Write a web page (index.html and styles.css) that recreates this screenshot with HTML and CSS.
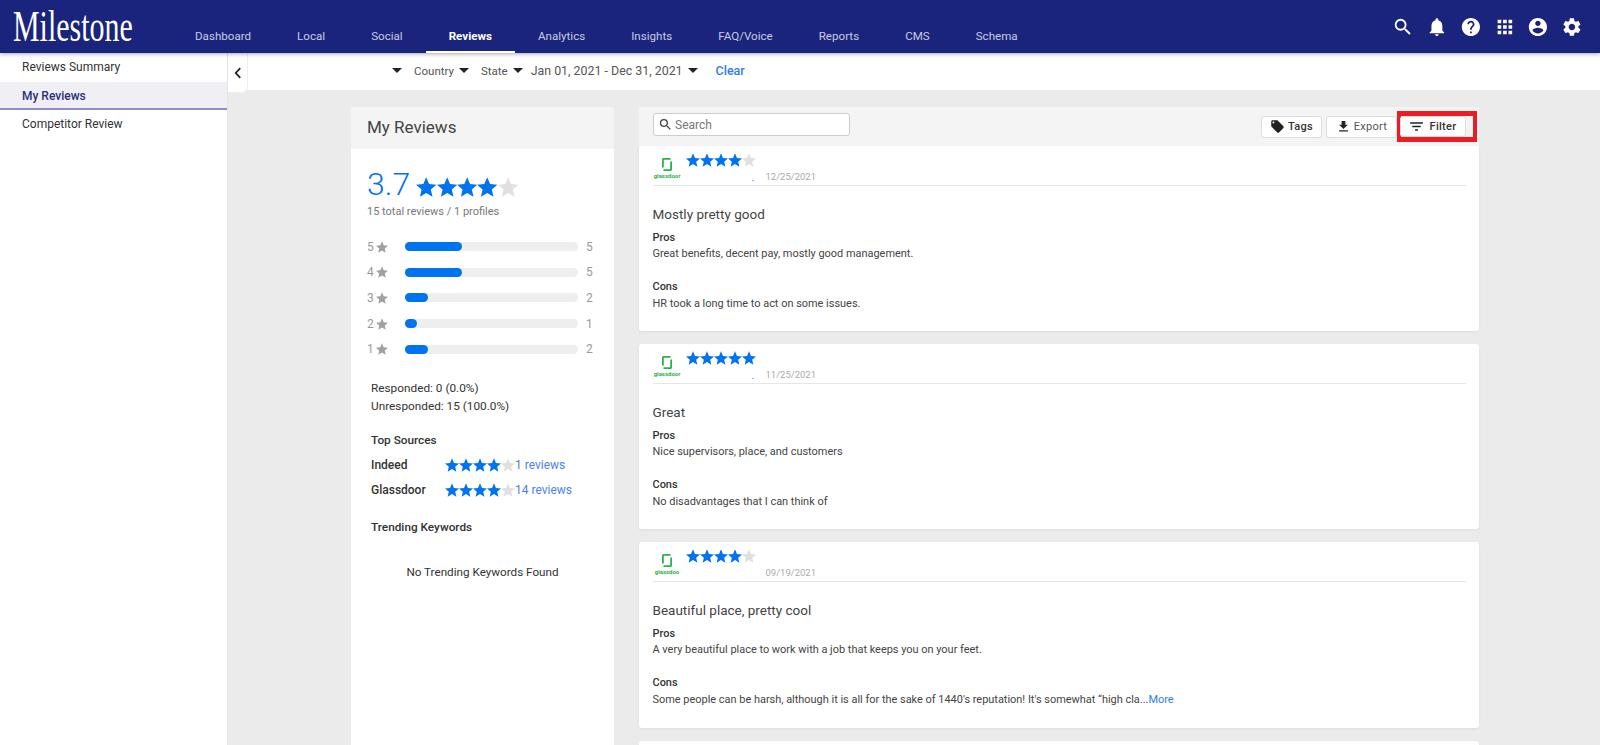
FILE: index.html
```html
<!DOCTYPE html>
<html lang="en">
<head>
    <meta charset="UTF-8">
    <title>My Reviews</title>
    <link rel="stylesheet" href="styles.css">
</head>
<body>
    <svg class="defs" width="0" height="0">
        <symbol id="i-star" viewBox="2 2 20 19"><path d="M12 17.27L18.18 21l-1.64-6.96L22 9.24l-7.19-.61L12 2 9.19 8.63 2 9.24l5.46 4.8L5.82 21z"/></symbol>
        <symbol id="i-search" viewBox="0 0 24 24"><path d="M15.5 14h-.79l-.28-.27A6.471 6.471 0 0 0 16 9.5 6.5 6.5 0 1 0 9.5 16c1.61 0 3.09-.59 4.23-1.57l.27.28v.79l5 4.99L20.49 19l-4.99-5zm-6 0C7.01 14 5 11.99 5 9.5S7.01 5 9.5 5 14 7.01 14 9.5 11.99 14 9.5 14z"/></symbol>
        <symbol id="i-caret" viewBox="7 10 10 5"><path d="M7 10l5 5 5-5z"/></symbol>
        <symbol id="i-glassdoor" viewBox="0 0 10 13"><path d="M1.500 0H8.500v1.800H1.800v7.700H0V1.500C0 .7.700 0 1.500 0zM10 3.500v8c0 .8-.7 1.500-1.500 1.500H1.500v-1.800h6.700V3.500z"/></symbol>
    </svg>

    <header class="topbar">
        <div class="logo"><span>Milestone</span></div>
        <nav class="tabs">
            <a class="tab">Dashboard</a>
            <a class="tab">Local</a>
            <a class="tab">Social</a>
            <a class="tab active">Reviews</a>
            <a class="tab">Analytics</a>
            <a class="tab">Insights</a>
            <a class="tab">FAQ/Voice</a>
            <a class="tab">Reports</a>
            <a class="tab">CMS</a>
            <a class="tab">Schema</a>
        </nav>
        <div class="top-icons">
            <svg viewBox="0 0 24 24"><use href="#i-search"/></svg>
            <svg viewBox="0 0 24 24"><path d="M12 22c1.100 0 2-.900 2-2h-4c0 1.100.890 2 2 2zm6-6v-5c0-3.070-1.640-5.640-4.500-6.320V4c0-.830-.670-1.500-1.500-1.500s-1.500.670-1.500 1.500v.680C7.630 5.360 6 7.920 6 11v5l-2 2v1h16v-1l-2-2z"/></svg>
            <svg viewBox="0 0 24 24"><path d="M12 2C6.480 2 2 6.480 2 12s4.480 10 10 10 10-4.480 10-10S17.520 2 12 2zm1 17h-2v-2h2v2zm2.070-7.750l-.900.920C13.450 12.900 13 13.500 13 15h-2v-.500c0-1.100.450-2.100 1.170-2.830l1.240-1.260c.370-.360.590-.860.590-1.410 0-1.100-.900-2-2-2s-2 .900-2 2H8c0-2.210 1.790-4 4-4s4 1.790 4 4c0 .880-.360 1.680-.930 2.250z"/></svg>
            <svg viewBox="0 0 24 24"><path d="M4 8h4V4H4v4zm6 12h4v-4h-4v4zm-6 0h4v-4H4v4zm0-6h4v-4H4v4zm6 0h4v-4h-4v4zm6-10v4h4V4h-4zm-6 4h4V4h-4v4zm6 6h4v-4h-4v4zm0 6h4v-4h-4v4z"/></svg>
            <svg viewBox="0 0 24 24"><path d="M12 2C6.480 2 2 6.480 2 12s4.480 10 10 10 10-4.480 10-10S17.520 2 12 2zm0 3c1.660 0 3 1.340 3 3s-1.340 3-3 3-3-1.340-3-3 1.340-3 3-3zm0 14.200c-2.500 0-4.710-1.280-6-3.220.030-1.990 4-3.080 6-3.080 1.990 0 5.970 1.090 6 3.080-1.290 1.940-3.500 3.220-6 3.220z"/></svg>
            <svg viewBox="0 0 24 24"><path d="M19.140 12.940c.040-.300.060-.610.060-.940 0-.320-.020-.640-.070-.940l2.030-1.580c.180-.140.230-.410.120-.610l-1.920-3.320c-.120-.220-.370-.290-.590-.220l-2.390.960c-.500-.380-1.030-.700-1.620-.940l-.360-2.540c-.040-.240-.240-.410-.480-.410h-3.840c-.240 0-.430.170-.470.410l-.360 2.540c-.590.240-1.130.570-1.620.940l-2.390-.960c-.220-.080-.470 0-.590.220L2.740 8.870c-.120.210-.080.470.120.610l2.030 1.580c-.050.300-.090.630-.090.940s.020.640.070.940l-2.030 1.580c-.180.140-.230.410-.120.610l1.920 3.320c.120.220.370.290.590.220l2.390-.960c.500.380 1.030.700 1.620.940l.360 2.540c.050.240.240.410.480.410h3.840c.240 0 .440-.170.470-.410l.360-2.540c.590-.240 1.130-.560 1.620-.940l2.390.960c.220.080.470 0 .590-.220l1.920-3.320c.120-.220.070-.470-.120-.610l-2.010-1.580zM12 15.600c-1.980 0-3.600-1.620-3.600-3.600s1.620-3.600 3.600-3.600 3.600 1.620 3.600 3.600-1.620 3.600-3.600 3.600z"/></svg>
        </div>
    </header>

    <div class="shell">
        <aside class="sidebar">
            <a class="side-item">Reviews Summary</a>
            <a class="side-item current">My Reviews</a>
            <a class="side-item">Competitor Review</a>
        </aside>

        <div class="page">
            <div class="filterbar">
                <button class="collapse">
                    <svg viewBox="0 0 10 16"><path d="M8 1.500L2 8l6 6.500" fill="none" stroke="#222" stroke-width="2.400"/></svg>
                </button>
                <div class="filters">
                    <svg class="caret"><use href="#i-caret"/></svg>
                    <span class="small">Country</span>
                    <svg class="caret"><use href="#i-caret"/></svg>
                    <span class="small">State</span>
                    <svg class="caret"><use href="#i-caret"/></svg>
                    <span class="range">Jan 01, 2021 - Dec 31, 2021</span>
                    <svg class="caret"><use href="#i-caret"/></svg>
                    <a class="clear">Clear</a>
                </div>
            </div>

            <div class="columns">
                <section class="summary">
                    <h2 class="summary-title">My Reviews</h2>
                    <div class="score">
                        <span class="score-num">3.7</span>
                        <span class="stars big">
                            <svg class="on"><use href="#i-star"/></svg><svg class="on"><use href="#i-star"/></svg><svg class="on"><use href="#i-star"/></svg><svg class="on"><use href="#i-star"/></svg><svg><use href="#i-star"/></svg>
                        </span>
                    </div>
                    <p class="score-sub">15 total reviews / 1 profiles</p>

                    <div class="bars">
                        <div class="bar-row"><span class="bar-label">5<svg><use href="#i-star"/></svg></span><div class="track"><div class="fill" style="width:33%"></div></div><span class="bar-val">5</span></div>
                        <div class="bar-row"><span class="bar-label">4<svg><use href="#i-star"/></svg></span><div class="track"><div class="fill" style="width:33%"></div></div><span class="bar-val">5</span></div>
                        <div class="bar-row"><span class="bar-label">3<svg><use href="#i-star"/></svg></span><div class="track"><div class="fill" style="width:13.3%"></div></div><span class="bar-val">2</span></div>
                        <div class="bar-row"><span class="bar-label">2<svg><use href="#i-star"/></svg></span><div class="track"><div class="fill" style="width:6.7%"></div></div><span class="bar-val">1</span></div>
                        <div class="bar-row"><span class="bar-label">1<svg><use href="#i-star"/></svg></span><div class="track"><div class="fill" style="width:13.3%"></div></div><span class="bar-val">2</span></div>
                    </div>

                    <div class="stats">
                        <p>Responded: 0 (0.0%)</p>
                        <p>Unresponded: 15 (100.0%)</p>
                    </div>

                    <h3 class="side-head">Top Sources</h3>
                    <div class="source first-source">
                        <span class="source-name">Indeed</span>
                        <span class="stars">
                            <svg class="on"><use href="#i-star"/></svg><svg class="on"><use href="#i-star"/></svg><svg class="on"><use href="#i-star"/></svg><svg class="on"><use href="#i-star"/></svg><svg><use href="#i-star"/></svg>
                        </span>
                        <a class="source-link">1 reviews</a>
                    </div>
                    <div class="source">
                        <span class="source-name">Glassdoor</span>
                        <span class="stars">
                            <svg class="on"><use href="#i-star"/></svg><svg class="on"><use href="#i-star"/></svg><svg class="on"><use href="#i-star"/></svg><svg class="on"><use href="#i-star"/></svg><svg><use href="#i-star"/></svg>
                        </span>
                        <a class="source-link">14 reviews</a>
                    </div>

                    <h3 class="side-head trending">Trending Keywords</h3>
                    <p class="no-keywords">No Trending Keywords Found</p>
                </section>

                <section class="reviews">
                    <div class="toolbar">
                        <label class="search">
                            <svg viewBox="0 0 24 24"><use href="#i-search"/></svg>
                            <span>Search</span>
                        </label>
                        <div class="actions">
                            <button class="tool-btn tags">
                                <svg viewBox="0 0 24 24"><path d="M21.410 11.580l-9-9C12.050 2.220 11.550 2 11 2H4c-1.100 0-2 .900-2 2v7c0 .550.220 1.050.590 1.420l9 9c.360.360.860.580 1.410.580.550 0 1.050-.220 1.410-.590l7-7c.370-.360.590-.860.590-1.410 0-.550-.230-1.060-.590-1.420zM5.500 7C4.670 7 4 6.330 4 5.500S4.670 4 5.500 4 7 4.670 7 5.500 6.330 7 5.500 7z"/></svg>
                                Tags
                            </button>
                            <button class="tool-btn export">
                                <svg viewBox="0 0 24 24"><path d="M5 20h14v-2H5v2zM19 9h-4V3H9v6H5l7 7 7-7z"/></svg>
                                Export
                            </button>
                            <div class="highlight">
                                <button class="tool-btn filter">
                                    <svg viewBox="0 0 24 24"><path d="M10 18h4v-2h-4v2zM3 6v2h18V6H3zm3 7h12v-2H6v2z"/></svg>
                                    Filter
                                </button>
                            </div>
                        </div>
                    </div>

                    <article class="card first">
                        <div class="card-head">
                            <div class="source-logo"><svg><use href="#i-glassdoor"/></svg><span>glassdoor</span></div>
                            <div class="stars card-stars"><svg class="on"><use href="#i-star"/></svg><svg class="on"><use href="#i-star"/></svg><svg class="on"><use href="#i-star"/></svg><svg class="on"><use href="#i-star"/></svg><svg><use href="#i-star"/></svg></div>
                            <span class="dot">.</span>
                            <span class="date">12/25/2021</span>
                        </div>
                        <h4 class="card-title">Mostly pretty good</h4>
                        <h5 class="label">Pros</h5>
                        <p class="body">Great benefits, decent pay, mostly good management.</p>
                        <h5 class="label cons">Cons</h5>
                        <p class="body cons-text">HR took a long time to act on some issues.</p>
                    </article>

                    <article class="card">
                        <div class="card-head">
                            <div class="source-logo"><svg><use href="#i-glassdoor"/></svg><span>glassdoor</span></div>
                            <div class="stars card-stars"><svg class="on"><use href="#i-star"/></svg><svg class="on"><use href="#i-star"/></svg><svg class="on"><use href="#i-star"/></svg><svg class="on"><use href="#i-star"/></svg><svg class="on"><use href="#i-star"/></svg></div>
                            <span class="dot">.</span>
                            <span class="date">11/25/2021</span>
                        </div>
                        <h4 class="card-title">Great</h4>
                        <h5 class="label">Pros</h5>
                        <p class="body">Nice supervisors, place, and customers</p>
                        <h5 class="label cons">Cons</h5>
                        <p class="body cons-text">No disadvantages that I can think of</p>
                    </article>

                    <article class="card long">
                        <div class="card-head">
                            <div class="source-logo"><svg><use href="#i-glassdoor"/></svg><span>glassdoo</span></div>
                            <div class="stars card-stars"><svg class="on"><use href="#i-star"/></svg><svg class="on"><use href="#i-star"/></svg><svg class="on"><use href="#i-star"/></svg><svg class="on"><use href="#i-star"/></svg><svg><use href="#i-star"/></svg></div>
                            <span class="date">09/19/2021</span>
                        </div>
                        <h4 class="card-title">Beautiful place, pretty cool</h4>
                        <h5 class="label">Pros</h5>
                        <p class="body">A very beautiful place to work with a job that keeps you on your feet.</p>
                        <h5 class="label cons">Cons</h5>
                        <p class="body cons-text">Some people can be harsh, although it is all for the sake of 1440's reputation! It's somewhat “high cla...<a class="more">More</a></p>
                    </article>

                    <article class="card"></article>
                </section>
            </div>
        </div>
    </div>
</body>
</html>
```

FILE: styles.css
```css
* {
    box-sizing: border-box;
}

html, body {
    height: 100%;
}

body {
    margin: 0;
    font-family: Roboto, Arial, sans-serif;
    font-size: 12px;
    color: #333;
    background-color: #ebebeb;
    overflow: hidden;
}

h2, h3, h4, h5, p {
    margin: 0;
    font-weight: 400;
}

.defs {
    position: absolute;
}

/* top bar */
.topbar {
    display: flex;
    align-items: stretch;
    height: 53px;
    background-color: #1b247c;
    box-shadow: 0 1px 4px rgba(0, 0, 0, .35);
    position: relative;
    z-index: 2;
}

.logo {
    width: 172px;
    padding: 1px 0 0 13px;
    font-family: "Liberation Serif", serif;
    font-size: 44px;
    line-height: 52px;
    color: #fff;
    white-space: nowrap;
}

.logo span {
    display: inline-block;
    transform: scaleX(.68);
    transform-origin: left center;
}

.tabs {
    display: flex;
}

.tab {
    display: flex;
    align-items: center;
    padding: 20px 23px 0;
    font-size: 11.600px;
    color: #c9cbe3;
    border-bottom: 2px solid transparent;
}

.tab.active {
    color: #fff;
    font-weight: 700;
    border-bottom-color: #fff;
}

.top-icons {
    display: flex;
    align-items: center;
    gap: 12px;
    margin-left: auto;
    padding: 0 17px 0 0;
}

.top-icons svg {
    width: 21.800px;
    height: 22px;
    fill: #fff;
}

/* side menu */
.shell {
    display: flex;
    height: 692px;
    overflow: hidden;
}

.sidebar {
    width: 228px;
    flex-shrink: 0;
    background-color: #fff;
    border-right: 1px solid #e4e4e4;
}

.side-item {
    display: block;
    height: 28.600px;
    padding-left: 22px;
    font-size: 12px;
    line-height: 29px;
    color: #333;
}

.side-item.current {
    color: #2b2f7a;
    font-weight: 500;
    background-color: #f0eff6;
    border-bottom: 2px solid #8f8fc6;
}

.page {
    flex: 1;
    min-width: 0;
    height: 692px;
    overflow: hidden;
}

/* filter row */
.filterbar {
    display: flex;
    height: 37px;
    background-color: #fff;
}

.collapse {
    width: 20px;
    height: 40px;
    padding: 0;
    background-color: #fff;
    border: 1px solid #eee;
    border-top: 0;
    border-left: 0;
    border-radius: 0 0 6px 0;
    display: flex;
    align-items: center;
    justify-content: center;
    z-index: 1;
}

.collapse svg {
    width: 8px;
    height: 12px;
}

.filters {
    display: flex;
    align-items: center;
    padding: 0 0 2px 144px;
    font-size: 12.500px;
    color: #555;
}

.small {
    font-size: 11.500px;
}

.range {
    margin-left: -4px;
    font-size: 12.400px;
}

.caret {
    width: 10px;
    height: 5px;
    margin: 0 12px 0 5px;
    fill: #222;
}

.filters .caret:first-child {
    margin-left: 0;
}

.clear {
    margin-left: 6px;
    color: #2f7df0;
    font-weight: 500;
}

/* two columns */
.columns {
    display: flex;
    align-items: flex-start;
    gap: 25px;
    padding: 17px 0 0 123px;
}

.summary {
    width: 263px;
    height: 638px;
    background-color: #fff;
    border-radius: 3px 3px 0 0;
}

.summary-title {
    height: 42px;
    padding-left: 16px;
    font-size: 17px;
    line-height: 41px;
    color: #444;
    background-color: #f4f4f4;
    border-radius: 3px 3px 0 0;
}

.score {
    display: flex;
    align-items: center;
    gap: 6px;
    padding: 15px 0 0 16px;
}

.score-num {
    font-size: 32px;
    font-weight: 300;
    line-height: 40px;
    color: #0073ee;
}

.stars {
    display: inline-flex;
}

.stars svg {
    width: 14px;
    height: 14px;
    fill: #e0e0e0;
}

.stars svg.on {
    fill: #0073ee;
}

.stars.big {
    margin-top: 5px;
}

.stars.big svg {
    width: 20.400px;
    height: 20px;
}

.score-sub {
    padding: 1px 0 0 16px;
    font-size: 11px;
    line-height: 13px;
    color: #777;
}

.bars {
    padding: 16px 0 0 16px;
}

.bar-row {
    display: flex;
    align-items: center;
    height: 25.600px;
}

.bar-label {
    display: flex;
    align-items: center;
    gap: 2px;
    width: 38px;
    font-size: 12px;
    color: #999;
}

.bar-label svg {
    width: 12px;
    height: 12px;
    fill: #a0a0a0;
}

.track {
    width: 173px;
    height: 9px;
    background-color: #eee;
    border-radius: 5px;
}

.fill {
    height: 100%;
    background-color: #0073ee;
    border-radius: 5px;
}

.bar-val {
    margin-left: 8px;
    font-size: 12px;
    color: #999;
}

.stats {
    padding: 18.500px 0 0 20px;
    font-size: 11.800px;
    line-height: 17.300px;
    color: #333;
}

.side-head {
    padding: 17px 0 0 20px;
    font-size: 11.800px;
    font-weight: 500;
    line-height: 16px;
    color: #333;
}

.source {
    display: flex;
    align-items: center;
    height: 24px;
    padding-left: 20px;
    margin-top: 1px;
}

.source.first-source {
    margin-top: 5px;
}

.source-name {
    width: 74px;
    font-weight: 500;
}

.source-link {
    color: #4d7ff0;
}

.side-head.trending {
    padding-top: 17px;
}

.no-keywords {
    padding-top: 29px;
    text-align: center;
    font-size: 11.700px;
    line-height: 16px;
}

/* review column */
.reviews {
    width: 840px;
    display: flex;
    flex-direction: column;
    gap: 13px;
}

.toolbar {
    display: flex;
    align-items: center;
    justify-content: space-between;
    height: 39px;
    margin-bottom: -13px;
    padding: 0 2px 0 14px;
    background-color: #f4f4f4;
}

.search {
    display: flex;
    align-items: center;
    gap: 2px;
    width: 197px;
    height: 23px;
    margin-top: -4px;
    padding-left: 4px;
    font-size: 12px;
    color: #777;
    background-color: #fff;
    border: 1px solid #ccc;
    border-radius: 3px;
}

.search svg {
    width: 15px;
    height: 15px;
    fill: #444;
}

.actions {
    display: flex;
    align-items: center;
    gap: 4px;
}

.tool-btn {
    display: flex;
    align-items: center;
    justify-content: center;
    height: 22px;
    padding: 0;
    font-family: inherit;
    font-size: 11px;
    font-weight: 500;
    letter-spacing: .3px;
    color: #333;
    background-color: #fff;
    border: 1px solid #ddd;
    border-radius: 3px;
}

.tool-btn svg {
    width: 15px;
    height: 15px;
    fill: #222;
}

.tags {
    width: 61px;
    gap: 3px;
}

.export {
    width: 71px;
    gap: 3px;
    font-weight: 400;
    color: #555;
}

.highlight {
    margin-left: -4px;
    border-style: solid;
    border-color: #ed1c24;
    border-width: 5px 4px;
    width: 80px;
    height: 31px;
    display: flex;
    align-items: center;
}

.filter {
    width: 66px;
    height: 21px;
    margin-left: -1px;
    gap: 5px;
    padding-right: 2px;
}

.filter svg {
    width: 17px;
    height: 17px;
}

/* review cards */
.card {
    height: 185px;
    padding: 0 13px 0 13.500px;
    background-color: #fff;
    border-radius: 3px;
    box-shadow: 0 1px 3px rgba(0, 0, 0, .06);
}

.card.first {
    border-radius: 0 0 3px 3px;
}

.card.long {
    height: 186px;
}

.card-head {
    display: flex;
    height: 40px;
    border-bottom: 1px solid #e6e6e6;
    position: relative;
}

.source-logo {
    width: 33px;
    padding: 12px 4px 0 0;
    display: flex;
    flex-direction: column;
    align-items: center;
    font-size: 6px;
    font-weight: 700;
    line-height: 6px;
    color: #2bb24c;
}

.source-logo svg {
    width: 10px;
    height: 13px;
    fill: #2bb24c;
    margin-bottom: 2px;
}

.card-stars {
    height: 14px;
    margin-top: 7px;
}

.dot {
    position: absolute;
    left: 99px;
    top: 25px;
    font-size: 11px;
    color: #2f7df0;
}

.date {
    margin: 24px 0 0 10px;
    font-size: 9.500px;
    line-height: 13px;
    color: #aaa;
}

.card-title {
    padding-top: 19px;
    font-size: 13.500px;
    line-height: 18px;
    color: #444;
}

.label {
    padding-top: 7.500px;
    font-size: 10.950px;
    font-weight: 500;
    line-height: 14px;
    color: #333;
}

.label.cons {
    padding-top: 19px;
}

.body {
    padding-top: 2px;
    font-size: 10.950px;
    line-height: 14px;
    color: #444;
}

.cons-text {
    padding-top: 3px;
}

.more {
    color: #2f7df0;
}
```
